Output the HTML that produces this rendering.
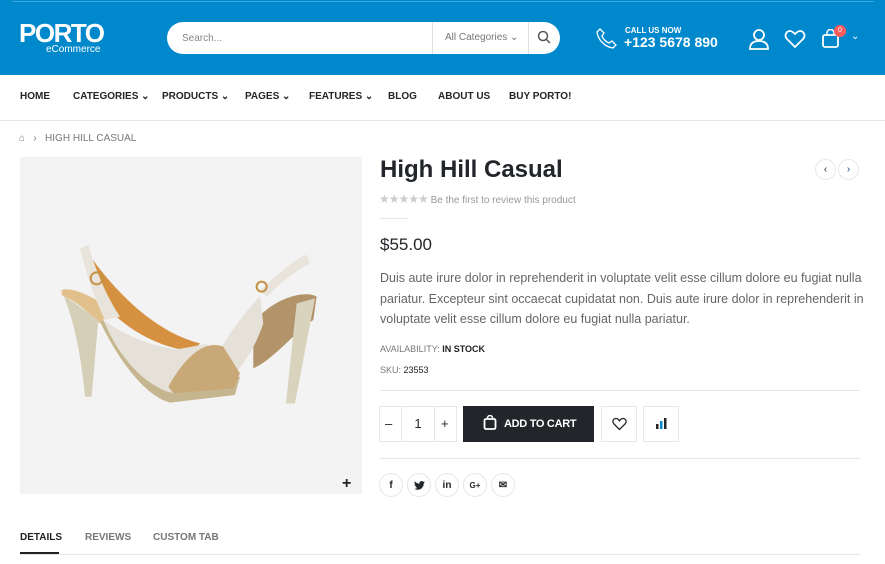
<!DOCTYPE html><html><head><style>
*{margin:0;padding:0;box-sizing:border-box}
body{width:885px;height:564px;overflow:hidden;font-family:"Liberation Sans",sans-serif;background:#fff;color:#222529;position:relative}
.a{position:absolute}
.hdr{left:0;top:0;width:885px;height:75px;background:#0088cc}
.nav span{position:absolute;top:91px;font-size:10px;font-weight:bold;color:#222529}
.circ{border:1px solid #e7e7e7;border-radius:50%;width:24px;height:24px;display:flex;align-items:center;justify-content:center;font-size:10px;font-weight:bold}
.box{border:1px solid #e7e7e7;height:36px}
</style></head><body>
<div class="a hdr"></div>
<div class="a" style="left:12px;top:1px;width:862px;height:1px;background:#3fa6d9"></div>
<div class="a" style="left:19px;top:18px;color:#fff;font-size:26px;font-weight:bold;letter-spacing:-1.5px;line-height:30px">PORTO</div>
<div class="a" style="left:46px;top:44px;color:#fff;font-size:10px">eCommerce</div>
<div class="a" style="left:167px;top:22px;width:393px;height:32px;background:#fff;border-radius:16px"></div>
<div class="a" style="left:182px;top:33px;font-size:10px;color:#888">Search...</div>
<div class="a" style="left:432px;top:22px;width:1px;height:32px;background:#e0e0e0"></div>
<div class="a" style="left:445px;top:32px;font-size:10px;color:#777">All Categories ⌄</div>
<div class="a" style="left:528px;top:22px;width:1px;height:32px;background:#e0e0e0"></div>
<svg class="a" style="left:537px;top:30px" width="15" height="15"><circle cx="6" cy="6" r="4.5" stroke="#555" stroke-width="1.5" fill="none"/><line x1="9.5" y1="9.5" x2="13" y2="13" stroke="#555" stroke-width="1.5"/></svg>
<svg class="a" style="left:596px;top:27px" width="22" height="22" viewBox="0 0 22 22"><path d="M4 2l4 4-2 3c1 3 4 6 7 7l3-2 4 4-3 3C9 20 2 13 1 5z" stroke="#fff" stroke-width="1.3" fill="none"/></svg>
<div class="a" style="left:625px;top:26px;font-size:8px;font-weight:bold;color:#fff">CALL US NOW</div>
<div class="a" style="left:624px;top:34px;font-size:14px;font-weight:bold;color:#fff">+123 5678 890</div>
<svg class="a" style="left:748px;top:28px" width="22" height="22"><circle cx="11" cy="7" r="5" stroke="#fff" stroke-width="1.8" fill="none"/><path d="M2 21c0-6 4-8 9-8s9 2 9 8z" stroke="#fff" stroke-width="1.8" fill="none"/></svg>
<svg class="a" style="left:784px;top:29px" width="22" height="20"><path d="M11 18L3 10C0 7 2 2 6 2c2 0 4 2 5 3 1-1 3-3 5-3 4 0 6 5 3 8z" stroke="#fff" stroke-width="1.8" fill="none"/></svg>
<svg class="a" style="left:821px;top:29px" width="20" height="20"><rect x="2" y="6" width="15" height="12" rx="2" stroke="#fff" stroke-width="1.8" fill="none"/><path d="M6 6V4a3.5 3.5 0 0 1 7 0v2" stroke="#fff" stroke-width="1.5" fill="none"/></svg>
<div class="a" style="left:834px;top:25px;width:12px;height:12px;border-radius:50%;background:#ff5b5b;color:#fff;font-size:7px;text-align:center;line-height:12px">0</div>
<div class="a" style="left:851px;top:31px;color:#fff;font-size:10px">⌄</div>
<div class="nav"><span style="left:20px">HOME</span><span style="left:73px">CATEGORIES ⌄</span><span style="left:162px">PRODUCTS ⌄</span><span style="left:245px">PAGES ⌄</span><span style="left:309px">FEATURES ⌄</span><span style="left:388px">BLOG</span><span style="left:438px">ABOUT US</span><span style="left:509px">BUY PORTO!</span></div>
<div class="a" style="left:0;top:120px;width:885px;height:1px;background:#e7e7e7"></div>
<div class="a" style="left:19px;top:133px;font-size:10px;color:#777">⌂ &nbsp; › &nbsp;&nbsp;HIGH HILL CASUAL</div>
<div class="a" style="left:20px;top:157px;width:342px;height:337px;background:#f3f3f3"></div>
<svg class="a" style="left:20px;top:157px" width="342" height="337">
<g transform="translate(0,63) scale(0.3333)">
<path d="M700 310 C760 230 860 210 890 230 L880 300 C830 330 760 420 700 445z" fill="#b3946a"/>
<path d="M830 250 L885 235 L825 550 L798 550z" fill="#d9d2bd"/>
<path d="M720 210 C780 160 830 110 860 105 L870 130 C830 150 780 190 740 230z" fill="#e8e4dc"/>
<path d="M600 390 C640 320 690 260 720 230 L730 310 C710 370 680 420 650 455z" fill="#e6e1d8"/>
<path d="M125 210 C160 200 220 230 275 270 L240 310 C200 270 160 240 125 225z" fill="#e2c08c"/>
<path d="M130 225 L235 300 L215 530 L195 530 C185 420 165 310 130 225z" fill="#d6cfb8"/>
<path d="M195 85 C250 170 380 330 540 370 L520 395 C390 380 280 300 240 230z" fill="#d5913f"/>
<path d="M180 85 L205 75 C230 160 260 230 300 290 L255 300 C220 230 200 160 180 85z" fill="#e8e4dc"/>
<path d="M250 300 C320 350 400 380 470 388 L560 372 L600 420 L460 520 C380 500 300 420 250 300z" fill="#e6e1d8"/>
<path d="M240 305 C300 430 380 530 450 548 L645 525 L660 470 L460 520 C380 500 300 420 250 300z" fill="#c6b68f"/>
<path d="M445 500 C500 400 560 360 610 380 L660 460 L640 505 L460 520z" fill="#c9a878"/>
<circle cx="230" cy="175" r="18" stroke="#c49245" stroke-width="6" fill="none"/>
<circle cx="725" cy="200" r="15" stroke="#c49245" stroke-width="6" fill="none"/>
</g>
<text x="322" y="331" font-size="16" font-weight="bold" fill="#222">+</text></svg>
<div class="a" style="left:380px;top:156px;font-size:24px;font-weight:bold;color:#222529">High Hill Casual</div>
<div class="a" style="left:379px;top:192px;font-size:10px;color:#999"><span style="color:#ccc;font-size:12px;letter-spacing:-1px">★★★★★</span> Be the first to review this product</div>
<div class="a" style="left:380px;top:218px;width:29px;height:1px;background:#e7e7e7"></div>
<div class="a" style="left:380px;top:235px;font-size:17px;color:#222529">$55.00</div>
<div class="a" style="left:380px;top:268px;width:485px;font-size:12.5px;line-height:20.5px;color:#666">Duis aute irure dolor in reprehenderit in voluptate velit esse cillum dolore eu fugiat nulla pariatur. Excepteur sint occaecat cupidatat non. Duis aute irure dolor in reprehenderit in voluptate velit esse cillum dolore eu fugiat nulla pariatur.</div>
<div class="a" style="left:380px;top:344px;font-size:9px;color:#777">AVAILABILITY: <b style="color:#222">IN STOCK</b></div>
<div class="a" style="left:380px;top:365px;font-size:9px;color:#777">SKU: <b style="color:#222;font-weight:normal">23553</b></div>
<div class="a" style="left:380px;top:390px;width:480px;height:1px;background:#e7e7e7"></div>
<div class="a box" style="left:379px;top:406px;width:78px"></div>
<div class="a" style="left:401px;top:406px;width:34px;height:36px;border-left:1px solid #e7e7e7;border-right:1px solid #e7e7e7;text-align:center;line-height:36px;font-size:13px">1</div>
<div class="a" style="left:385px;top:416px;font-size:13px">–</div>
<div class="a" style="left:441px;top:416px;font-size:13px">+</div>
<div class="a" style="left:463px;top:406px;width:131px;height:36px;background:#222529;color:#fff;font-size:11px;font-weight:bold;line-height:36px;padding-left:41px;letter-spacing:-0.3px">ADD TO CART</div>
<svg class="a" style="left:483px;top:415px" width="14" height="16"><rect x="1.5" y="4" width="11" height="10" rx="1.5" stroke="#fff" stroke-width="1.8" fill="none"/><path d="M4.5 4V3a2.5 2.5 0 0 1 5 0v1" stroke="#fff" stroke-width="1.5" fill="none"/></svg>
<div class="a box" style="left:601px;top:406px;width:36px"></div>
<svg class="a" style="left:612px;top:417px" width="15" height="14"><path d="M7.5 12.5L2 7C0 5 1 1.5 4 1.5c1.5 0 3 1.5 3.5 2.2C8 3 9.5 1.5 11 1.5c3 0 4 3.5 2 5.5z" stroke="#222529" stroke-width="1.3" fill="none"/></svg>
<div class="a box" style="left:643px;top:406px;width:36px"></div>
<svg class="a" style="left:655px;top:416px" width="12" height="14"><rect x="1" y="8" width="2.5" height="5" fill="#222529"/><rect x="5" y="5" width="2.5" height="8" fill="#0088cc"/><rect x="9" y="2" width="2.5" height="11" fill="#222529"/></svg>
<div class="a" style="left:380px;top:458px;width:480px;height:1px;background:#e7e7e7"></div>
<div class="a circ" style="left:379px;top:473px">f</div>
<div class="a circ" style="left:407px;top:473px"><svg width="11" height="9" viewBox="0 0 24 20"><path d="M24 2.4c-.9.4-1.8.6-2.8.8 1-.6 1.8-1.6 2.2-2.7-1 .6-2 1-3.1 1.2A4.9 4.9 0 0 0 11.9 6 14 14 0 0 1 1.7.9a4.9 4.9 0 0 0 1.5 6.6c-.8 0-1.6-.3-2.2-.6 0 2.4 1.7 4.4 3.9 4.8-.7.2-1.5.2-2.2.1.6 2 2.4 3.4 4.6 3.4A9.9 9.9 0 0 1 0 17.3 14 14 0 0 0 7.5 19.5c9 0 14-7.5 14-14v-.6c1-.7 1.8-1.6 2.5-2.5z" fill="#222529"/></svg></div>
<div class="a circ" style="left:435px;top:473px">in</div>
<div class="a circ" style="left:463px;top:473px;font-size:8px">G+</div>
<div class="a circ" style="left:491px;top:473px">✉</div>
<div class="a circ" style="left:815px;top:159px;width:21px;height:21px;font-weight:normal">‹</div>
<div class="a circ" style="left:838px;top:159px;width:21px;height:21px;font-weight:normal;color:#1a3a8a">›</div>
<div class="a" style="left:20px;top:532px;font-size:10px;font-weight:bold;color:#222">DETAILS</div>
<div class="a" style="left:85px;top:532px;font-size:10px;font-weight:bold;color:#777">REVIEWS</div>
<div class="a" style="left:153px;top:532px;font-size:10px;font-weight:bold;color:#777">CUSTOM TAB</div>
<div class="a" style="left:20px;top:554px;width:840px;height:1px;background:#e7e7e7"></div>
<div class="a" style="left:20px;top:552px;width:39px;height:2px;background:#222"></div>
</body></html>
